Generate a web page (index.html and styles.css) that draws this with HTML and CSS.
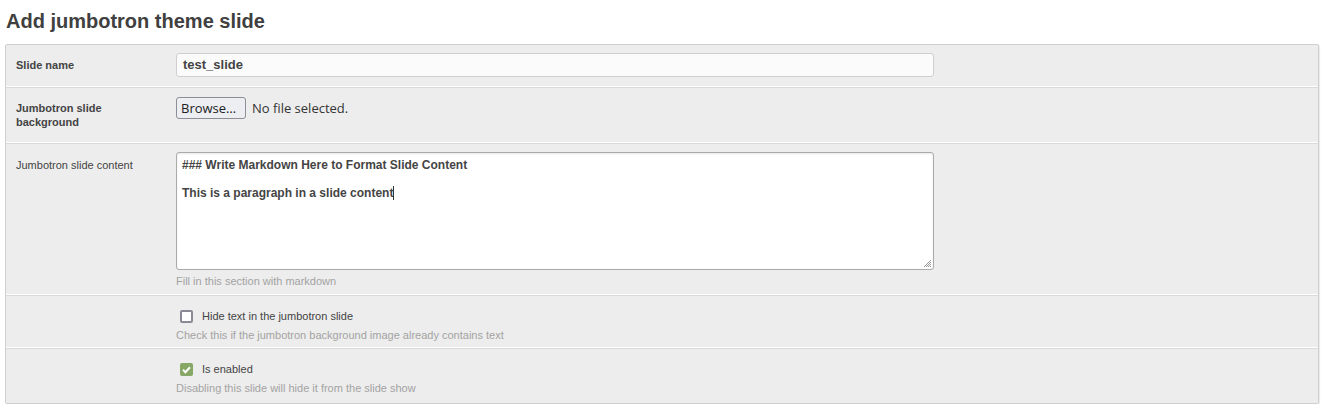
FILE: index.html
```html
<!DOCTYPE html>
<html>
<head>
<meta charset="utf-8">
<link rel="stylesheet" href="styles.css">
</head>
<body>
<h1 class="title">Add jumbotron theme slide</h1>
<div class="panel">
  <div class="row row-name">
    <div class="label bold">Slide name</div>
    <div class="field">
      <div class="input">test_slide</div>
    </div>
  </div>
  <div class="row row-bg">
    <div class="label bold">Jumbotron slide<br>background</div>
    <div class="field file-field">
      <span class="browse">Browse…</span>
      <span class="nofile">No file selected.</span>
    </div>
  </div>
  <div class="row row-content">
    <div class="label">Jumbotron slide content</div>
    <div class="field">
      <div class="textarea">
        <div class="ta-line">### Write Markdown Here to Format Slide Content</div>
        <div class="ta-line ta-gap">This is a paragraph in a slide content<span class="caret"></span></div>
        <svg class="grip" width="10" height="10" viewBox="0 0 10 10"><path d="M9 2 L2 9 M9 4 L4 9 M9 6 L6 9 M9 8 L8 9" stroke="#999" stroke-width="1"/></svg>
      </div>
      <div class="help">Fill in this section with markdown</div>
    </div>
  </div>
  <div class="row row-check">
    <div class="label"></div>
    <div class="field">
      <div class="check-line"><span class="box"></span><span class="check-label">Hide text in the jumbotron slide</span></div>
      <div class="help">Check this if the jumbotron background image already contains text</div>
    </div>
  </div>
  <div class="row row-check last">
    <div class="label"></div>
    <div class="field">
      <div class="check-line"><span class="box checked"><svg width="13" height="13" viewBox="0 0 13 13"><path d="M3 6.8 L5.4 9.2 L10 4.2" fill="none" stroke="#fff" stroke-width="2"/></svg></span><span class="check-label">Is enabled</span></div>
      <div class="help">Disabling this slide will hide it from the slide show</div>
    </div>
  </div>
</div>
</body>
</html>
```
FILE: styles.css
```css
body {
  margin: 0;
  font-family: "Liberation Sans", Arial, sans-serif;
  color: #444;
  background: #fff;
}
.title {
  margin: 0;
  padding: 9px 0 0 6px;
  height: 35px;
  box-sizing: border-box;
  font-size: 20px;
  font-weight: bold;
  color: #404040;
  line-height: 24px;
}
.panel {
  margin: 9px 7px 0 5px;
  background: #ededed;
  border: 1px solid #cfcfcf;
  border-radius: 2px;
  box-shadow: 1px 1px 1px rgba(0,0,0,0.08);
}
.row {
  display: flex;
  border-bottom: 1px solid #d9d9d9;
  box-shadow: inset 0 -1px 0 #fff;
}
.row.last { border-bottom: none; box-shadow: none; }
.label {
  width: 170px;
  box-sizing: border-box;
  padding-left: 10px;
  font-size: 11px;
  line-height: 14px;
  color: #444;
  flex: none;
}
.bold { font-weight: bold; }
.field { width: 758px; }
.row-name { height: 42px; }
.row-name .label { padding-top: 13px; }
.row-name .field { padding-top: 8px; }
.input {
  height: 24px;
  box-sizing: border-box;
  border: 1px solid #cfcfcf;
  border-radius: 3px;
  background: #fbfbfb;
  font-size: 13px;
  font-weight: bold;
  line-height: 22px;
  padding-left: 6px;
  color: #444;
}
.row-bg { height: 55px; }
.row-bg .label { padding-top: 13px; }
.row-bg .field { padding-top: 8px; display: flex; align-items: center; height: 23px; }
.browse {
  font-family: "Open Sans", "DejaVu Sans", sans-serif;
  font-size: 13px;
  color: #222;
  height: 22px;
  line-height: 20px;
  box-sizing: border-box;
  border: 1px solid #8e8e98;
  border-radius: 3px;
  background: #eceef2;
  padding: 0 4px;
  width: 70px;
}
.nofile {
  font-family: "Open Sans", "DejaVu Sans", sans-serif;
  font-size: 13px;
  color: #333;
  margin-left: 6px;
}
.row-content { height: 151px; }
.row-content .label { padding-top: 14px; }
.row-content .field { padding-top: 8px; }
.textarea {
  position: relative;
  height: 118px;
  box-sizing: border-box;
  border: 1px solid #aaa;
  border-radius: 3px;
  background: #fff;
  box-shadow: inset 0 1px 2px rgba(0,0,0,0.1);
  padding: 5px 5px 4px;
  font-size: 12px;
  font-weight: bold;
  line-height: 14px;
  color: #444;
}
.ta-gap { margin-top: 14px; }
.caret {
  display: inline-block;
  width: 1px;
  height: 14px;
  background: #333;
  vertical-align: -3px;
}
.grip { position: absolute; right: 1px; bottom: 1px; }
.help {
  font-size: 11px;
  color: #a3a3a3;
  line-height: 14px;
  margin-top: 4px;
}
.row-check { height: 52px; }
.row-check .field { padding-top: 13px; }
.check-line { display: flex; align-items: center; height: 14px; padding-left: 4px; }
.box {
  width: 13px;
  height: 13px;
  box-sizing: border-box;
  border: 2px solid #8a8a96;
  border-radius: 2px;
  background: #fff;
  display: inline-block;
}
.box.checked {
  background: #86a765;
  border: none;
  display: inline-flex;
}
.check-label {
  font-size: 11px;
  color: #444;
  margin-left: 9px;
}
.row-check .help { margin-top: 5px; }
.row-check.last { height: 54px; }
```
